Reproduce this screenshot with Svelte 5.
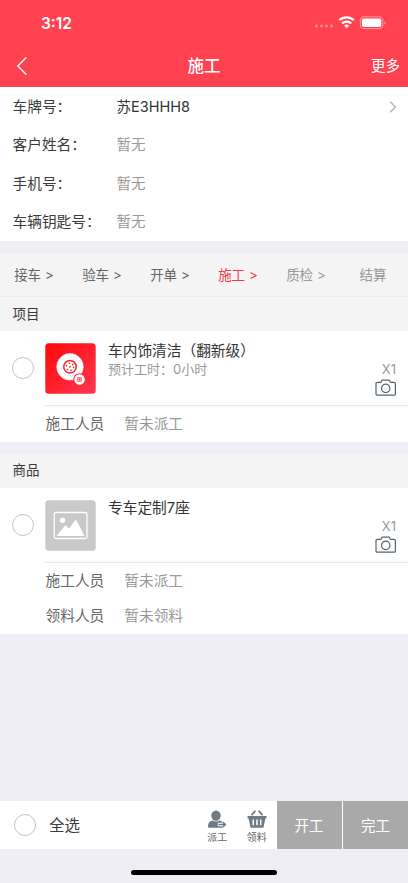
<script>
  const info = [
    { label: '车牌号：', value: '苏E3HHH8', filled: true },
    { label: '客户姓名：', value: '暂无' },
    { label: '手机号：', value: '暂无' },
    { label: '车辆钥匙号：', value: '暂无' }
  ];
  const steps = [
    { name: '接车' },
    { name: '验车' },
    { name: '开单' },
    { name: '施工', state: 'active' },
    { name: '质检', state: 'todo' },
    { name: '结算', state: 'todo', last: true }
  ];
</script>

{#snippet camera()}
  <svg class="camera" width="22" height="18" viewBox="0 0 22 18" fill="none" stroke="#55656f" stroke-width="1.2">
    <path d="M2.300 3.400h3.300q.9 0 .9-1.100 0-1.200 1-1.200h6.400q1 0 1 1.200 0 1.100.9 1.100h3.300a1.300 1.300 0 0 1 1.300 1.300v10.200a1.300 1.300 0 0 1-1.300 1.300H2.300A1.300 1.300 0 0 1 1 14.900V4.700a1.300 1.300 0 0 1 1.300-1.300z" />
    <circle cx="10.700" cy="9.400" r="4.200" />
  </svg>
{/snippet}

<div class="screen">
  <header>
    <div class="status">
      <span class="time">3:12</span>
      <svg width="74" height="16" viewBox="0 0 74 16">
        <g fill="#fff" opacity=".35">
          <rect x="2" y="10.500" width="3" height="3" rx="1" /><rect x="7" y="10.500" width="3" height="3" rx="1" />
          <rect x="12" y="10.500" width="3" height="3" rx="1" /><rect x="17" y="10.500" width="3" height="3" rx="1" />
        </g>
        <g fill="none" stroke="#fff" stroke-width="2.200">
          <path d="M26.300 6.300a10.500 10.500 0 0 1 14.600 0" />
          <path d="M29 9.400a6.600 6.600 0 0 1 9.200 0" />
        </g>
        <path d="M31.200 11.600a3.600 3.600 0 0 1 4.800 0L33.600 14.200z" fill="#fff" />
        <rect x="47.300" y="2.800" width="22.600" height="11.800" rx="3.300" fill="none" stroke="#fff" opacity=".45" />
        <rect x="48.900" y="4.400" width="19.400" height="8.600" rx="1.800" fill="#fff" />
        <path d="M71.300 6.900v3.800q1.300-.5 1.300-1.900t-1.300-1.900z" fill="#fff" opacity=".5" />
      </svg>
    </div>
    <nav>
      <svg class="back" width="12" height="20" viewBox="0 0 12 20"><path d="M10.300 1.500L1.800 10l8.500 8.500" fill="none" stroke="#fff" stroke-width="1.400" /></svg>
      <h1>施工</h1>
      <span>更多</span>
    </nav>
  </header>

  <section class="info">
    {#each info as row}
      <div class="info-row">
        <span class="label">{row.label}</span>
        <span class="value" class:filled={row.filled}>{row.value}</span>
        {#if row.filled}
          <svg width="8" height="12" viewBox="0 0 8 12"><path d="M1.300.8L6.300 6l-5 5.200" fill="none" stroke="#b8b8b8" stroke-width="1.500" /></svg>
        {/if}
      </div>
    {/each}
  </section>

  <div class="steps">
    {#each steps as step}
      <span class={step.state}>{step.name}{step.last ? '' : ' >'}</span>
    {/each}
  </div>

  <h2>项目</h2>
  <section class="card">
    <div class="item">
      <i class="radio"></i>
      <svg class="thumb" width="51" height="51" viewBox="0 0 51 51">
        <defs><linearGradient id="tile" x1="0" y1="0" x2="1" y2="1"><stop stop-color="#ff0908" /><stop offset="1" stop-color="#ff3850" /></linearGradient></defs>
        <rect x=".3" y=".3" width="50.400" height="50.400" rx="3.500" fill="url(#tile)" />
        <circle cx="25" cy="23.800" r="13.200" fill="#fff" />
        <circle cx="25" cy="23.800" r="13.200" fill="none" stroke="#fff" stroke-width="1" stroke-dasharray="1.200 1" />
        <circle cx="25" cy="23.800" r="7" fill="#fb2433" />
        <circle cx="25" cy="23.800" r="5.500" fill="#fff" />
        <circle cx="25" cy="23.800" r="3.700" fill="none" stroke="#fb2433" stroke-width="1.400" stroke-dasharray="1.500 2.370" />
        <circle cx="25" cy="23.800" r=".9" fill="#fb2433" />
        <circle cx="34.500" cy="36.500" r="5.800" fill="#fff" stroke="#fe2938" stroke-width="1.100" />
        <path d="M32.500 34.500h4v4h-4zM32.500 36.500h4M34.500 34.500v4" fill="#ffb0b5" stroke="#fb5460" stroke-width=".6" />
      </svg>
      <div class="text"><b>车内饰清洁（翻新级）</b><small>预计工时：0小时</small></div>
      <div class="side"><span>X1</span>{@render camera()}</div>
    </div>
    <div class="people">
      <div><span>施工人员</span><em>暂未派工</em></div>
    </div>
  </section>

  <h2 class="spaced">商品</h2>
  <section class="card">
    <div class="item">
      <i class="radio"></i>
      <svg class="thumb" width="51" height="51" viewBox="0 0 51 51">
        <rect x=".3" y=".3" width="50.400" height="50.400" rx="3.500" fill="#c9c9c9" />
        <rect x="9.200" y="12.500" width="32.800" height="26" rx="1.800" fill="none" stroke="#fff" stroke-width="1.300" />
        <circle cx="17.600" cy="20.300" r="2.700" fill="#fff" />
        <path d="M11.500 36l8.300-10.200q.8-.8 1.600 0l2.600 3 5.900-8.300q.8-.9 1.600 0L39.500 36z" fill="#fff" />
      </svg>
      <div class="text"><b>专车定制7座</b></div>
      <div class="side"><span>X1</span>{@render camera()}</div>
    </div>
    <div class="people">
      <div><span>施工人员</span><em>暂未派工</em></div>
      <div><span>领料人员</span><em>暂未领料</em></div>
    </div>
  </section>

  <footer>
    <i class="radio"></i>
    <span class="all">全选</span>
    <div class="tool">
      <svg width="20" height="19" viewBox="0 0 20 19" fill="#707a83">
        <ellipse cx="9" cy="5.600" rx="4.700" ry="5.200" />
        <path d="M5.300 10.500q3.700 2.200 7.400 0c2.200.5 3.500 1.500 4 3.200v4H2.200Q1 17.700 1 16.500c0-3.600 1.400-5.300 4.300-6z" />
        <path d="M10.800 14.500h7.500M15.700 11.700l3.100 2.800-3.100 2.800" fill="none" stroke="#fff" stroke-width="3.600" />
        <path d="M11.500 14.500h6.700M15.800 12.100l2.600 2.400-2.600 2.400" fill="none" stroke="#707a83" stroke-width="1.500" />
      </svg>
      <span>派工</span>
    </div>
    <div class="tool">
      <svg width="20" height="19" viewBox="0 0 20 19">
        <path d="M5 4.600l2.800-3.300M15 4.600l-2.800-3.300" stroke="#707a83" stroke-width="1.800" stroke-linecap="round" />
        <path d="M.5 6h19v2.300h-1L16.600 17q-.2.700-1 .7H4.400q-.8 0-1-.7L1.500 8.300h-1z" fill="#707a83" />
        <path d="M6.300 9.500v5.700M10 9.500v5.700M13.700 9.500v5.700" stroke="#fff" stroke-width="1.500" />
      </svg>
      <span>领料</span>
    </div>
    <button>开工</button>
    <button>完工</button>
  </footer>
  <div class="home"><i></i></div>
</div>

<style>
  :global(body) { background: #efeef4; }
  * { box-sizing: border-box; }
  .screen {
    width: 408px; height: 883px; display: flex; flex-direction: column; overflow: hidden;
    background: #efeef4; color: #3b3b3b; font: 14.700px/20px Inter, "Noto Sans CJK SC", sans-serif;
  }
  header { height: 87px; flex: none; background: #ff4150; color: #fff; border-bottom: 1px solid #ee4655; }
  .status { height: 44px; padding: 15px 21px 0 41px; display: flex; justify-content: space-between; }
  .status svg { margin-top: -1px; }
  .time { font-size: 15.500px; font-weight: 600; line-height: 17px; }
  nav { height: 43px; display: flex; align-items: center; justify-content: space-between; padding: 0 8px 0 16px; }
  nav span { width: 29px; font-size: 14.500px; white-space: nowrap; }
  .back { margin-right: 9px; }
  h1 { margin: 0; font-size: 16.500px; font-weight: 500; }
  .info { height: 154px; flex: none; background: #fff; }
  .info-row { height: 38.500px; display: flex; align-items: center; padding: 1px 11px 0 12.500px; }
  .label { width: 104px; white-space: nowrap; }
  .value { flex: 1; color: #999; font-size: 14.500px; }
  .value.filled { color: #333; }
  .steps {
    margin-top: 12px; height: 44px; flex: none; display: grid; grid-template-columns: repeat(6, 1fr);
    align-items: center; text-align: center; background: #f4f4f4; border-bottom: 1px solid #ebebeb;
    font-size: 13.500px; color: #666;
  }
  .steps .active { color: #f23a4a; }
  .steps .todo { color: #999; }
  .steps span:last-child { padding-right: 2px; }
  h2 { margin: 0; height: 34px; flex: none; padding-left: 12.500px; background: #f4f4f4; font-size: 13.500px; font-weight: 400; line-height: 34px; }
  h2.spaced { height: 34.500px; margin-top: 12px; line-height: 33px; }
  .card { flex: none; background: #fff; }
  .item { height: 74px; display: flex; padding: 12px 0 0 12px; }
  .radio { width: 22px; height: 22px; flex: none; border: 1px solid #c4c4c6; border-radius: 50%; background: #fff; }
  .item .radio { margin: 14px 11px 0 0; }
  .thumb { flex: none; margin-right: 12px; }
  .text { flex: 1; display: flex; flex-direction: column; margin-top: -1px; }
  .text b { font-weight: 400; color: #333; line-height: 19px; }
  .text small { font-size: 13px; line-height: 17px; color: #999; }
  .side { display: flex; flex-direction: column; align-items: flex-end; padding: 18px 11px 0 0; color: #999; font-size: 13px; line-height: 17px; }
  .side span { padding-right: 1px; }
  .camera { margin-top: 1px; }
  .people { margin-left: 45px; border-top: 1px solid #e8e8e8; }
  .people div { height: 35.500px; display: flex; align-items: center; gap: 20px; padding-left: .5px; color: #666; }
  em { font-style: normal; color: #999; }
  footer { height: 48px; flex: none; margin-top: auto; display: flex; align-items: center; background: #fff; padding-left: 14px; }
  .all { flex: 1; padding: 1px 0 0 13px; font-size: 15.500px; }
  .tool { width: 39.500px; display: flex; flex-direction: column; align-items: center; font-size: 10px; line-height: 12px; color: #666; gap: 2.500px; padding-top: 3px; }
  .all + .tool { margin-left: auto; }
  .tool + button { flex: none; }
  button { width: 65px; height: 48px; padding: 1px 0 0; border: 0; background: #a9a9a9; color: #fff; font: inherit; font-size: 14.500px; }
  button + button { flex: none; margin-left: 1.500px; }
  .home { height: 34px; flex: none; display: flex; justify-content: center; align-items: flex-end; padding-bottom: 8px; }
  .home i { width: 146px; height: 5px; border-radius: 3px; background: #000; }
</style>
